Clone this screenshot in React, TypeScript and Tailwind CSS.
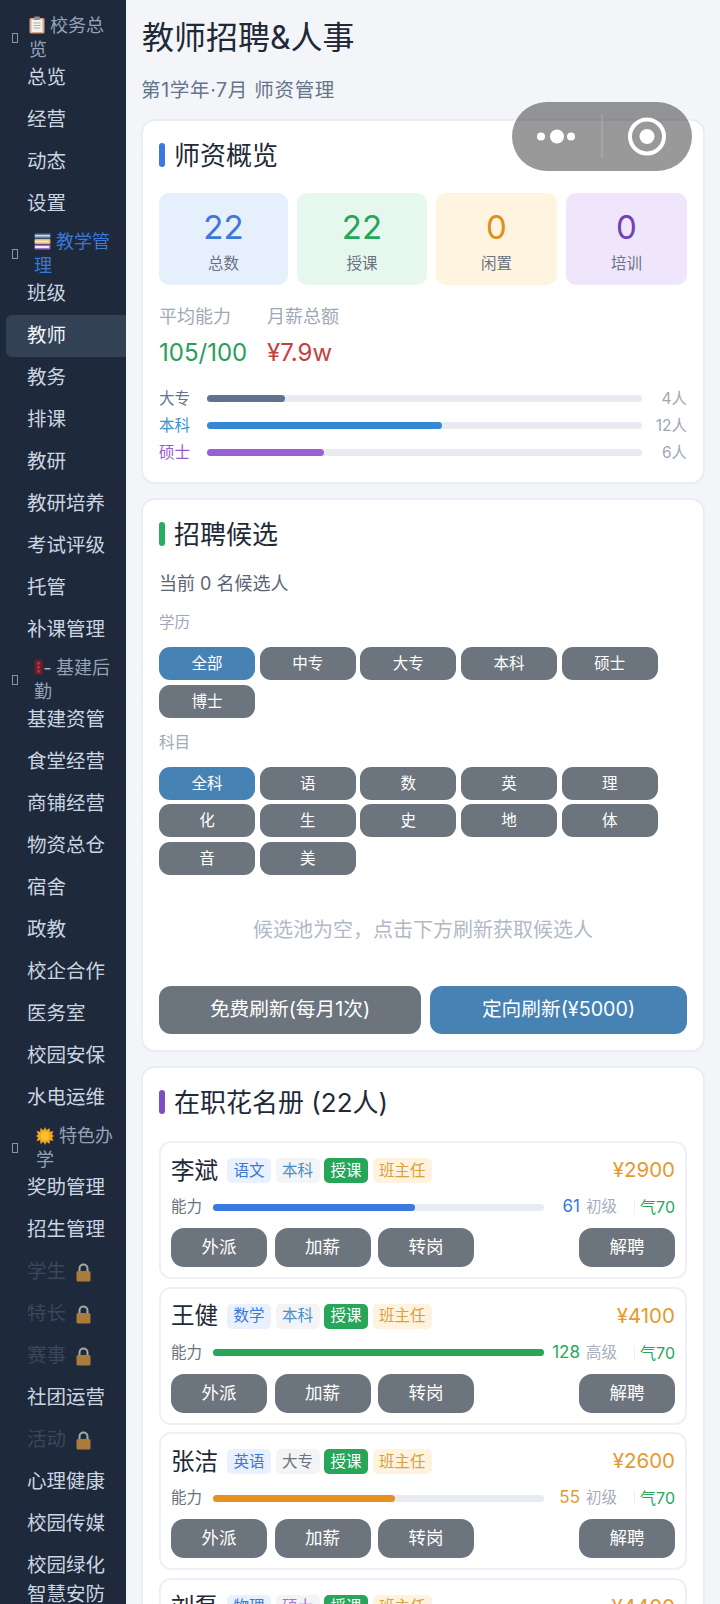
import React from 'react';

const font = { fontFamily: 'Inter, "Noto Sans CJK SC", sans-serif' };

const Tofu = () => <span className="block w-[6px] h-[10px] border border-[#8a94a6] shrink-0" />;

const ClipIcon = () => (
  <svg viewBox="0 0 16 18" className="inline-block w-4 h-[18px] align-[-2px]">
    <rect x="0.5" y="2" width="15" height="15.5" rx="1.5" fill="#d9a78a" />
    <rect x="2.5" y="3.5" width="11" height="12.5" fill="#f3f1ee" />
    <rect x="5" y="0.5" width="6" height="3.5" rx="1" fill="#8d8f94" />
    <path d="M4.5 7h7M4.5 9.5h7M4.5 12h7" stroke="#a9aeb6" strokeWidth="1" />
  </svg>
);

const BooksIcon = () => (
  <svg viewBox="0 0 17 17" className="inline-block w-[17px] h-[17px] align-[-2px]">
    <rect x="0.5" y="0.5" width="16" height="5" rx="1" fill="#5f7f9c" />
    <rect x="1" y="2" width="15" height="1.5" fill="#d9d8d2" />
    <rect x="0.5" y="6" width="16" height="5" rx="1" fill="#e9b25a" />
    <rect x="1" y="7.5" width="14" height="2" fill="#f6ecd8" />
    <rect x="0.5" y="11.5" width="16" height="5" rx="1" fill="#a56bc9" />
    <rect x="1" y="13" width="14" height="2" fill="#efe9f4" />
  </svg>
);

const CraneIcon = () => (
  <svg viewBox="0 0 17 17" className="inline-block w-[17px] h-[17px] align-[-2px]">
    <rect x="0.5" y="0.5" width="8" height="15" fill="#6b1f2a" />
    <path d="M3.500 3h2v2.500h-2zM3.500 7h2v2.500h-2zM3.500 11h2v2.500h-2z" fill="#c9405a" />
    <rect x="10.500" y="9" width="6" height="1.500" fill="#a9b3c2" />
  </svg>
);

const SunIcon = () => (
  <svg viewBox="0 0 18 18" className="inline-block w-[18px] h-[18px] align-[-3px]">
    <path
      d="M9 0l1.600 3.200L13.500 1l.3 3.700L17.500 4l-1.600 3.400L18 9l-2.100 1.600L17.500 14l-3.700-.7-.3 3.700-2.900-2.200L9 18l-1.600-3.200L4.500 17l-.3-3.700-3.700.7 1.600-3.400L0 9l2.100-1.600L.5 4l3.700.7L4.500 1l2.900 2.200z"
      fill="#f5a623"
    />
    <circle cx="9" cy="9" r="4" fill="#fbc02d" />
  </svg>
);

const LockIcon = () => (
  <svg viewBox="0 0 15 19" className="inline-block w-[15px] h-[19px] shrink-0 mt-px">
    <path d="M3.500 9V5.500a4 4 0 0 1 8 0V9" fill="none" stroke="#a9a9a4" strokeWidth="2" />
    <rect x="0.500" y="8" width="14" height="10.500" rx="1.500" fill="#a97c3c" />
  </svg>
);

type SideItem =
  | { kind: 'group'; label: string; icon: React.ReactNode; pad: string; active?: boolean }
  | { kind: 'item'; label: string; active?: boolean; locked?: boolean; tight?: boolean };

const item = (label: string, extra?: { active?: boolean; locked?: boolean; tight?: boolean }): SideItem => ({ kind: 'item', label, ...extra });

const sidebar: SideItem[] = [
  { kind: 'group', label: '校务总览', icon: <ClipIcon />, pad: 'pl-[29px]' },
  item('总览'), item('经营'), item('动态'), item('设置'),
  { kind: 'group', label: '教学管理', icon: <BooksIcon />, pad: 'pl-[34px]', active: true },
  item('班级'), item('教师', { active: true }), item('教务'), item('排课'), item('教研'), item('教研培养'), item('考试评级'), item('托管'), item('补课管理'),
  { kind: 'group', label: '基建后勤', icon: <CraneIcon />, pad: 'pl-[34px]' },
  item('基建资管'), item('食堂经营'), item('商铺经营'), item('物资总仓'), item('宿舍'), item('政教'), item('校企合作'), item('医务室'), item('校园安保'), item('水电运维'),
  { kind: 'group', label: '特色办学', icon: <SunIcon />, pad: 'pl-[36px]' },
  item('奖助管理'), item('招生管理'), item('学生', { locked: true }), item('特长', { locked: true }), item('赛事', { locked: true }), item('社团运营'), item('活动', { locked: true }), item('心理健康'), item('校园传媒'), item('校园绿化', { tight: true }), item('智慧安防'),
];

const Sidebar = () => (
  <div className="w-[126px] shrink-0 bg-[#1e293b] pt-[9px] h-full overflow-hidden">
    {sidebar.map((s) =>
      s.kind === 'group' ? (
        <div key={s.label} className="relative h-12 pt-[10px] flex items-center">
          <div className="absolute left-[12px] top-[24px]"><Tofu /></div>
          <div className={`${s.pad} w-full pr-3 text-[18px] leading-6 ${s.active ? 'text-[#3b78d8]' : 'text-[#94a3b8]'}`}>
            {s.icon}
            <span className="ml-[5px]">{s.label}</span>
          </div>
        </div>
      ) : (
        <div
          key={s.label}
          className={`h-[42px] flex items-center gap-[10px] text-[19.5px] ml-[6px] pl-[21px] rounded-l-md ${
            s.active ? 'bg-[#334155] text-[#f1f5f9]' : s.locked ? 'text-[#475569]' : 'text-[#cbd5e1]'
          } ${s.tight ? 'mb-[-13px]' : ''}`}
        >
          <span className={s.locked ? 'opacity-70' : ''}>{s.label}</span>
          {s.locked && <LockIcon />}
        </div>
      ),
    )}
  </div>
);

const Card = ({ title, bar, children }: { title: string; bar: string; children: React.ReactNode }) => (
  <div className="bg-white border-2 border-[#e9edf5] rounded-[14px] px-4 pt-[11px] pb-4 mb-[14px]">
    <div className="flex items-center gap-[9px] h-[46px]">
      <span className={`w-[6px] h-6 rounded-[3px] ${bar}`} />
      <span className="text-[26px] text-[#1f2937]">{title}</span>
    </div>
    {children}
  </div>
);

const stats = [
  { n: '22', l: '总数', box: 'w-[129px] bg-[#e6f0fd]', c: 'text-[#3b78d8]' },
  { n: '22', l: '授课', box: 'w-[130px] bg-[#e6f8ee]', c: 'text-[#27a65a]' },
  { n: '0', l: '闲置', box: 'w-[121px] bg-[#fff4e0]', c: 'text-[#dd8f22]' },
  { n: '0', l: '培训', box: 'w-[121px] bg-[#efe6fc]', c: 'text-[#6f42b8]' },
];

const dist = [
  { l: '大专', c: 'text-[#64748b]', f: 'bg-[#5f7290]', w: '18%', n: '4人' },
  { l: '本科', c: 'text-[#3d8fd1]', f: 'bg-[#3489d2]', w: '54%', n: '12人' },
  { l: '硕士', c: 'text-[#9b59d0]', f: 'bg-[#9b5fd3]', w: '27%', n: '6人' },
];

const Overview = () => (
  <Card title="师资概览" bar="bg-[#3b78e0]">
    <div className="flex gap-[9px] mt-[15px]">
      {stats.map((s) => (
        <div key={s.l} className={`${s.box} h-[92px] rounded-[10px] flex flex-col items-center pt-[11px]`}>
          <span className={`text-[33px] leading-[46px] ${s.c}`}>{s.n}</span>
          <span className="text-[15.500px] leading-[24px] mt-[2px] text-[#6b7280]">{s.l}</span>
        </div>
      ))}
    </div>
    <div className="flex gap-[19px] mt-[18px]">
      <div className="flex flex-col w-[89px]">
        <span className="text-[18px] leading-[28px] text-[#a0a8b5]">平均能力</span>
        <span className="text-[24px] leading-[44px] text-[#2a9d5c]">105/100</span>
      </div>
      <div className="flex flex-col">
        <span className="text-[18px] leading-[28px] text-[#a0a8b5]">月薪总额</span>
        <span className="text-[24px] leading-[44px] text-[#c53f3f]">¥7.9w</span>
      </div>
    </div>
    <div className="mt-[10px] flex flex-col">
      {dist.map((d) => (
        <div key={d.l} className="h-[27px] flex items-center">
          <span className={`w-[48px] text-[15.500px] ${d.c}`}>{d.l}</span>
          <div className="w-[435px] h-[7px] rounded bg-[#e8ebf1]">
            <div className={`h-full rounded ${d.f}`} style={{ width: d.w }} />
          </div>
          <span className="flex-1 text-right text-[15.500px] text-[#a0a8b5]">{d.n}</span>
        </div>
      ))}
    </div>
  </Card>
);

const Chips = ({ items }: { items: string[] }) => (
  <div className="flex flex-wrap gap-[4.700px]">
    {items.map((t, i) => (
      <div
        key={t}
        className={`w-[96px] h-[33px] rounded-[11px] flex items-center justify-center text-[15.500px] text-white ${
          i === 0 ? 'bg-[#4682b4]' : 'bg-[#6c757d]'
        }`}
      >
        {t}
      </div>
    ))}
  </div>
);

const Recruit = () => (
  <Card title="招聘候选" bar="bg-[#27ae60]">
    <div className="text-[18px] leading-6 text-[#5b6472] mt-[15px]">当前 0 名候选人</div>
    <div className="text-[15.500px] leading-5 text-[#a0a8b5] mt-[17px] mb-[14px]">学历</div>
    <Chips items={['全部', '中专', '大专', '本科', '硕士', '博士']} />
    <div className="text-[15.500px] leading-5 text-[#a0a8b5] mt-[15px] mb-[14px]">科目</div>
    <Chips items={['全科', '语', '数', '英', '理', '化', '生', '史', '地', '体', '音', '美']} />
    <div className="h-[111px] pb-[2px] flex items-center justify-center text-[20px] text-[#b2b9c5]">候选池为空，点击下方刷新获取候选人</div>
    <div className="flex gap-[9px]">
      <div className="w-[262px] h-[48px] rounded-xl bg-[#6c757d] text-white text-[19.700px] flex items-center justify-center">免费刷新(每月1次)</div>
      <div className="flex-1 h-[48px] rounded-xl bg-[#4682b4] text-white text-[19.700px] flex items-center justify-center">定向刷新(¥5000)</div>
    </div>
  </Card>
);

type Teacher = {
  name: string; subject: string; edu: string; eduC: string; pay: string;
  ability: number; width: string; grade: string; fill: string; numC: string;
};

const teachers: Teacher[] = [
  { name: '李斌', subject: '语文', edu: '本科', eduC: 'text-[#4a90c4]', pay: '¥2900', ability: 61, width: '61%', grade: '初级', fill: 'bg-[#3b78e0]', numC: 'text-[#3b78d8]' },
  { name: '王健', subject: '数学', edu: '本科', eduC: 'text-[#4a90c4]', pay: '¥4100', ability: 128, width: '100%', grade: '高级', fill: 'bg-[#27a65a]', numC: 'text-[#27a65a]' },
  { name: '张洁', subject: '英语', edu: '大专', eduC: 'text-[#6b7280]', pay: '¥2600', ability: 55, width: '55%', grade: '初级', fill: 'bg-[#e88f22]', numC: 'text-[#e09a35]' },
  { name: '刘磊', subject: '物理', edu: '硕士', eduC: 'text-[#a86fd6]', pay: '¥4400', ability: 80, width: '70%', grade: '中级', fill: 'bg-[#3b78e0]', numC: 'text-[#3b78d8]' },
];

const Tag = ({ className, children }: { className: string; children: React.ReactNode }) => (
  <span className={`h-[25px] px-[6.500px] rounded-[5px] flex items-center text-[15.500px] ${className}`}>{children}</span>
);

const ActionBtn = ({ children }: { children: React.ReactNode }) => (
  <div className="w-[96px] h-[39px] rounded-[13px] bg-[#6c757d] text-white text-[17.500px] flex items-center justify-center">{children}</div>
);

const TeacherCard = ({ t }: { t: Teacher }) => (
  <div className="border-2 border-[#eef0f5] rounded-xl px-[10px] pt-[14px] h-[138px]">
    <div className="flex items-center h-[27px]">
      <span className="text-[23.500px] text-[#1f2937] w-[56px]">{t.name}</span>
      <div className="flex gap-[4.500px]">
        <Tag className="bg-[#e8f1fd] text-[#3b78d8]">{t.subject}</Tag>
        <Tag className={`bg-[#f3f4f6] ${t.eduC}`}>{t.edu}</Tag>
        <Tag className="bg-[#27a65a] text-white">授课</Tag>
        <Tag className="bg-[#fff3e0] text-[#d9a13b]">班主任</Tag>
      </div>
      <span className="ml-auto text-[20.500px] text-[#e69a2e]">{t.pay}</span>
    </div>
    <div className="flex items-center h-[24px] mt-[11px]">
      <span className="w-[42px] text-[15.500px] text-[#6b7280]">能力</span>
      <div className="w-[331px] h-[7px] rounded bg-[#e8ebf1]">
        <div className={`h-full rounded ${t.fill}`} style={{ width: t.width }} />
      </div>
      <span className={`w-[36px] text-right text-[17px] ${t.numC}`}>{t.ability}</span>
      <span className="ml-[6px] text-[15.500px] text-[#a7aebb]">{t.grade}</span>
      <span className="ml-[17px] border-l border-[#eef0f5] h-[14px]" />
      <span className="ml-auto text-[16px] text-[#27a65a]">气70</span>
    </div>
    <div className="flex gap-[7.500px] mt-[9px]">
      <ActionBtn>外派</ActionBtn>
      <ActionBtn>加薪</ActionBtn>
      <ActionBtn>转岗</ActionBtn>
      <div className="ml-auto"><ActionBtn>解聘</ActionBtn></div>
    </div>
  </div>
);

const Capsule = () => (
  <div className="absolute left-[512px] top-[102px] w-[180px] h-[69px] rounded-full bg-black/40 ring-1 ring-white/10 flex items-center">
    <svg viewBox="0 0 180 69" className="w-full h-full">
      <circle cx="29" cy="34.500" r="4" fill="#fff" />
      <circle cx="45" cy="34.500" r="7" fill="#fff" />
      <circle cx="59" cy="34.500" r="4" fill="#fff" />
      <rect x="89.500" y="12" width="1" height="44" fill="#fff" fillOpacity="0.25" />
      <circle cx="135" cy="34.500" r="17" fill="none" stroke="#fff" strokeWidth="4" />
      <circle cx="135" cy="34.500" r="7.500" fill="#fff" />
    </svg>
  </div>
);

export default function App() {
  return (
    <div className="relative w-[720px] h-[1604px] overflow-hidden flex bg-[#f3f5f9]" style={font}>
      <Sidebar />
      <div className="w-[594px] pl-[15px] pr-[15px] h-full overflow-hidden">
        <div className="pl-px text-[32px] leading-[44px] text-[#1f2937] mt-[16px]">教师招聘&amp;人事</div>
        <div className="text-[19.500px] tracking-[0.7px] leading-6 text-[#64748b] mt-[18px] mb-[17px]">第1学年·7月 师资管理</div>
        <Overview />
        <Recruit />
        <Card title="在职花名册 (22人)" bar="bg-[#7d4fc0]">
          <div className="flex flex-col gap-[7.500px] mt-[16px]">
            {teachers.map((t) => (
              <TeacherCard key={t.name} t={t} />
            ))}
          </div>
        </Card>
      </div>
      <Capsule />
    </div>
  );
}
